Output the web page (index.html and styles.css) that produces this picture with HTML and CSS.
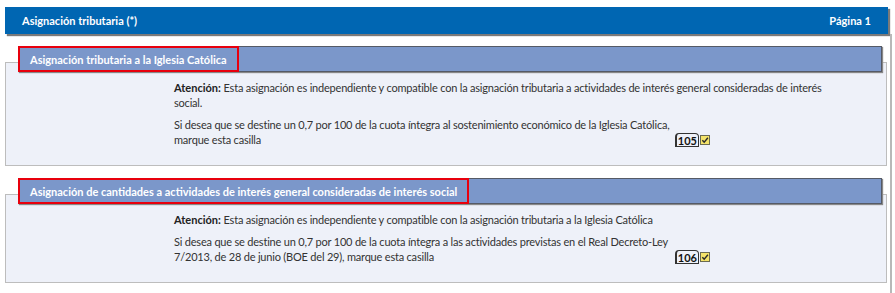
FILE: index.html
```html
<!DOCTYPE html>
<html lang="es">
<head>
<meta charset="utf-8">
<link rel="stylesheet" href="styles.css">
</head>
<body>
<div class="frame">
  <div class="topbar">
    <span class="topbar-title">Asignación tributaria (*)</span>
    <span class="topbar-page">Página 1</span>
  </div>
  <div class="sheet">
    <section class="block">
      <div class="block-head"><span class="block-title">Asignación tributaria a la Iglesia Católica</span></div>
      <div class="block-body">
        <p class="para"><b class="lead">Atención:</b> Esta asignación es independiente y compatible con la asignación tributaria a actividades de interés general consideradas de interés social.</p>
        <div class="row">
          <p class="para ask">Si desea que se destine un 0,7 por 100 de la cuota íntegra al sostenimiento económico de la Iglesia Católica, marque esta casilla</p>
          <div class="field"><span class="code">105</span><span class="chk"><svg viewBox="0 0 10 10" width="10" height="10"><rect x="0.5" y="0.5" width="9" height="9" fill="#f4e36a" stroke="#6b6b52"/><path d="M2.3 5.2 L4.2 7.1 L7.9 2.8" fill="none" stroke="#2a2a2a" stroke-width="1.4"/></svg></span></div>
        </div>
      </div>
    </section>
    <section class="block">
      <div class="block-head"><span class="block-title">Asignación de cantidades a actividades de interés general consideradas de interés social</span></div>
      <div class="block-body">
        <p class="para"><b class="lead">Atención:</b> Esta asignación es independiente y compatible con la asignación tributaria a la Iglesia Católica</p>
        <div class="row">
          <p class="para ask">Si desea que se destine un 0,7 por 100 de la cuota íntegra a las actividades previstas en el Real Decreto-Ley 7/2013, de 28 de junio (BOE del 29), marque esta casilla</p>
          <div class="field"><span class="code">106</span><span class="chk"><svg viewBox="0 0 10 10" width="10" height="10"><rect x="0.5" y="0.5" width="9" height="9" fill="#f4e36a" stroke="#6b6b52"/><path d="M2.3 5.2 L4.2 7.1 L7.9 2.8" fill="none" stroke="#2a2a2a" stroke-width="1.4"/></svg></span></div>
        </div>
      </div>
    </section>
  </div>
</div>
</body>
</html>
```

FILE: styles.css
```css
html, body {
  margin: 0;
  padding: 0;
  background: #ffffff;
}
body {
  font-family: "Lato", "Liberation Sans", sans-serif;
  font-size: 11px;
  letter-spacing: -0.2px;
  color: #333333;
}
.frame {
  margin: 7px 0 0 5px;
  width: 883px;
}
.topbar {
  height: 27px;
  background: #0066b2;
  display: flex;
  align-items: center;
  justify-content: space-between;
  padding: 0 17px 0 17px;
  color: #ffffff;
  font-weight: bold;
  font-size: 11px;
  letter-spacing: 0;
  box-shadow: 2px 2px 1px #7a7a7a;
}
.sheet {
  border-right: 2px solid #b8b8b8;
  margin-right: -4px;
  padding-top: 12px;
  height: 260px;
}
.block {
  margin-bottom: 12px;
}
.block-head {
  position: relative;
  z-index: 1;
  margin: 0 8px 0 13px;
  height: 24px;
  background: #7b97ca;
  border: 1px solid #555a66;
  box-shadow: 1px 1px 1px #888;
  display: flex;
  align-items: stretch;
}
.block-title {
  display: flex;
  align-items: center;
  border: 2px solid #e8000d;
  margin: -1px;
  padding: 0 10px;
  color: #ffffff;
  font-weight: bold;
  font-size: 11px;
  letter-spacing: 0;
}
.block-body {
  margin-top: -10px;
  background: #eef1f9;
  border: 1px solid #bdbdbd;
  padding: 17px 40px 18px 168px;
  width: 672px;
}
.para {
  margin: 0 0 7px 0;
  line-height: 15px;
}
.lead {
  letter-spacing: 0;
  color: #222;
}
.row {
  display: flex;
  align-items: flex-end;
}
.ask {
  width: 500px;
  margin: 0;
}
.field {
  display: flex;
  align-items: center;
  margin-left: auto;
  margin-right: 136px;
}
.code {
  font-weight: bold;
  font-size: 11px;
  line-height: 11px;
  letter-spacing: 0;
  color: #111;
  border: 1px solid #333;
  border-left-width: 2px;
  border-radius: 4px 4px 0 0;
  padding: 1px 1px 0 1px;
}
.chk {
  display: flex;
  margin-left: 1px;
}
```
